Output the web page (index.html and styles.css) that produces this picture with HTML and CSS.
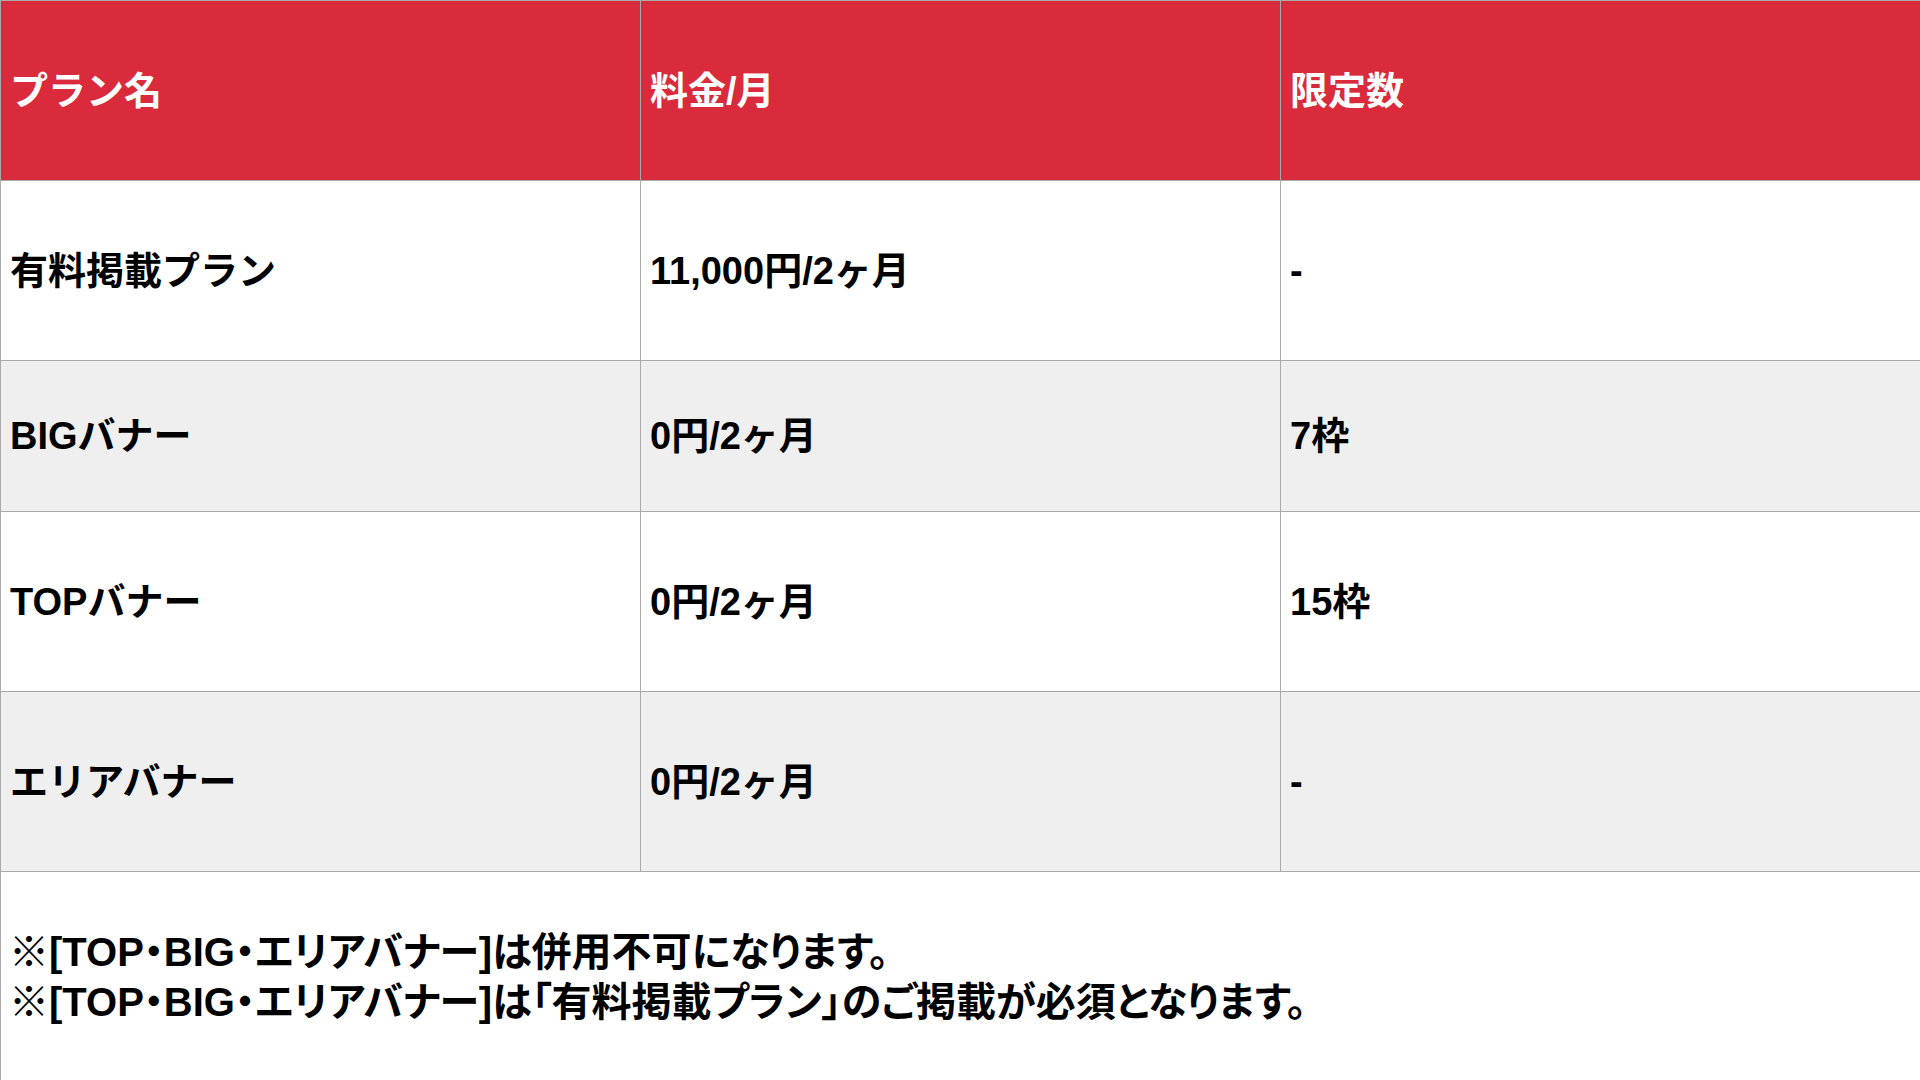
FILE: index.html
```html
<!DOCTYPE html>
<html lang="ja">
<head>
<meta charset="utf-8">
<title>プラン</title>
<link rel="stylesheet" href="styles.css">
</head>
<body>
<div class="page">
  <table class="plans">
    <colgroup><col class="c"><col class="c"><col class="c"></colgroup>
    <thead>
      <tr class="r-head">
        <th>プラン名</th>
        <th>料金/月</th>
        <th>限定数</th>
      </tr>
    </thead>
    <tbody>
      <tr class="r-tall">
        <td>有料掲載プラン</td>
        <td>11,000円/2ヶ月</td>
        <td>-</td>
      </tr>
      <tr class="r-short alt">
        <td>BIGバナー</td>
        <td>0円/2ヶ月</td>
        <td>7枠</td>
      </tr>
      <tr class="r-tall">
        <td>TOPバナー</td>
        <td>0円/2ヶ月</td>
        <td>15枠</td>
      </tr>
      <tr class="r-tall alt">
        <td>エリアバナー</td>
        <td>0円/2ヶ月</td>
        <td>-</td>
      </tr>
    </tbody>
  </table>
  <div class="notes">
    <p>※[TOP・BIG・エリアバナー]は併用不可になります。</p>
    <p>※[TOP・BIG・エリアバナー]は「有料掲載プラン」のご掲載が必須となります。</p>
  </div>
</div>
</body>
</html>
```

FILE: styles.css
```css
html, body {
  margin: 0;
  padding: 0;
  background: #ffffff;
}

body {
  font-family: "Liberation Sans", "Noto Sans CJK JP", sans-serif;
  font-weight: 700;
  color: #000000;
}

.page {
  width: 1920px;
  height: 1080px;
  overflow: hidden;
  display: flex;
  flex-direction: column;
}

.plans {
  width: 1921px;
  border-collapse: collapse;
  table-layout: fixed;
}

.plans .c {
  width: 640px;
}

.plans th,
.plans td {
  border: 1px solid #a9a9a9;
  padding: 0 0 0 9px;
  text-align: left;
  vertical-align: middle;
  font-size: 38px;
  font-weight: 700;
  line-height: 44px;
  white-space: nowrap;
}

.plans th {
  background: #d92b3b;
  color: #ffffff;
}

.r-head {
  height: 180px;
}

.r-tall {
  height: 180px;
}

.r-short {
  height: 151px;
}

.alt td {
  background: #efefef;
}

.notes {
  flex: 1;
  border-left: 1px solid #a9a9a9;
  display: flex;
  flex-direction: column;
  justify-content: center;
  padding-left: 8px;
  padding-top: 2px;
}

.notes p {
  margin: 0;
  font-size: 40px;
  line-height: 50px;
  white-space: nowrap;
  font-feature-settings: "palt";
}
```
